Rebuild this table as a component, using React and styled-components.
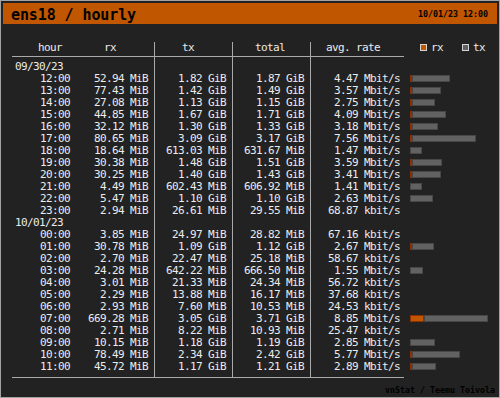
import React from "react";
import styled, { createGlobalStyle } from "styled-components";

const GlobalStyle = createGlobalStyle`
    *, *::before, *::after {
        box-sizing: border-box;
    }
    html, body {
        margin: 0;
        padding: 0;
        background: #222222;
    }
    body {
        font-family: "DejaVu Sans Mono", "Liberation Mono", monospace;
    }
`;

const ORANGE = "#c05600";
const LINE = "#aaaaaa";
const BAR_MAX = 78;

const days = [
    {
        date: "09/30/23",
        hours: [
            ["12:00", "52.94 MiB", "1.82 GiB", "1.87 GiB", "4.47 Mbit/s"],
            ["13:00", "77.43 MiB", "1.42 GiB", "1.49 GiB", "3.57 Mbit/s"],
            ["14:00", "27.08 MiB", "1.13 GiB", "1.15 GiB", "2.75 Mbit/s"],
            ["15:00", "44.85 MiB", "1.67 GiB", "1.71 GiB", "4.09 Mbit/s"],
            ["16:00", "32.12 MiB", "1.30 GiB", "1.33 GiB", "3.18 Mbit/s"],
            ["17:00", "80.65 MiB", "3.09 GiB", "3.17 GiB", "7.56 Mbit/s"],
            ["18:00", "18.64 MiB", "613.03 MiB", "631.67 MiB", "1.47 Mbit/s"],
            ["19:00", "30.38 MiB", "1.48 GiB", "1.51 GiB", "3.59 Mbit/s"],
            ["20:00", "30.25 MiB", "1.40 GiB", "1.43 GiB", "3.41 Mbit/s"],
            ["21:00", "4.49 MiB", "602.43 MiB", "606.92 MiB", "1.41 Mbit/s"],
            ["22:00", "5.47 MiB", "1.10 GiB", "1.10 GiB", "2.63 Mbit/s"],
            ["23:00", "2.94 MiB", "26.61 MiB", "29.55 MiB", "68.87 kbit/s"],
        ],
    },
    {
        date: "10/01/23",
        hours: [
            ["00:00", "3.85 MiB", "24.97 MiB", "28.82 MiB", "67.16 kbit/s"],
            ["01:00", "30.78 MiB", "1.09 GiB", "1.12 GiB", "2.67 Mbit/s"],
            ["02:00", "2.70 MiB", "22.47 MiB", "25.18 MiB", "58.67 kbit/s"],
            ["03:00", "24.28 MiB", "642.22 MiB", "666.50 MiB", "1.55 Mbit/s"],
            ["04:00", "3.01 MiB", "21.33 MiB", "24.34 MiB", "56.72 kbit/s"],
            ["05:00", "2.29 MiB", "13.88 MiB", "16.17 MiB", "37.68 kbit/s"],
            ["06:00", "2.93 MiB", "7.60 MiB", "10.53 MiB", "24.53 kbit/s"],
            ["07:00", "669.28 MiB", "3.05 GiB", "3.71 GiB", "8.85 Mbit/s"],
            ["08:00", "2.71 MiB", "8.22 MiB", "10.93 MiB", "25.47 kbit/s"],
            ["09:00", "10.15 MiB", "1.18 GiB", "1.19 GiB", "2.85 Mbit/s"],
            ["10:00", "78.49 MiB", "2.34 GiB", "2.42 GiB", "5.77 Mbit/s"],
            ["11:00", "45.72 MiB", "1.17 GiB", "1.21 GiB", "2.89 Mbit/s"],
        ],
    },
];

// flatten into display rows: a date line followed by its hours
const toMiB = (s) => {
    const [num, unit] = s.split(" ");
    return unit === "GiB" ? parseFloat(num) * 1024 : parseFloat(num);
};

const rows = days.flatMap((day) => [
    { type: "date", date: day.date },
    ...day.hours.map(([hour, rx, tx, total, rate]) => ({
        type: "hour",
        hour,
        rx,
        tx,
        total,
        rate,
    })),
]);

const maxTotal = Math.max(
    ...rows.filter((r) => r.type === "hour").map((r) => toMiB(r.total))
);

const Frame = styled.div`
    width: 500px;
    height: 398px;
    border: 1px solid #a3a3a3;
    padding: 2px;
    background: #222222;
    color: #ececec;
    display: flex;
    flex-direction: column;
`;

const TitleBar = styled.div`
    height: 21px;
    flex-shrink: 0;
    background: ${ORANGE};
    color: #000000;
    display: flex;
    justify-content: space-between;
    align-items: flex-start;
`;

const Title = styled.h1`
    margin: 0;
    padding: 3px 0 0 8px;
    font: bold 15px/18px "DejaVu Sans Mono", monospace;
    letter-spacing: -0.1px;
`;

const Tiny = styled.span`
    font: bold 8.3px/${(props) => props.$lh || 10}px "DejaVu Sans Mono",
        monospace;
    white-space: pre;
`;

const Stamp = styled(Tiny)`
    padding: 1px 9px 0 0;
`;

const Table = styled.div`
    display: flex;
    margin: 18px 0 0 9px;
    font-size: 11px;
    letter-spacing: -0.62px;
    white-space: pre;
`;

const Column = styled.div`
    display: flex;
    flex-direction: column;
    width: ${(props) => (props.$w ? `${props.$w}px` : "auto")};
    flex: ${(props) => (props.$w ? "none" : "1")};
    border-left: ${(props) => (props.$line ? `1px solid ${LINE}` : "none")};
`;

const Head = styled.div`
    display: flex;
    align-items: flex-start;
    height: 15px;
    padding-bottom: 3px;
    line-height: 11px;
    border-bottom: 1px solid
        ${(props) => (props.$rule ? LINE : "transparent")};
`;

const HeadLabel = styled.span`
    margin-left: ${(props) => props.$x}px;
`;

const Body = styled.div`
    padding: 4px 0;
    border-bottom: 1px solid
        ${(props) => (props.$rule ? LINE : "transparent")};
`;

const Row = styled.div`
    display: flex;
    justify-content: ${(props) => (props.$left ? "flex-start" : "flex-end")};
    height: 12px;
    line-height: 12px;
    padding: ${(props) => (props.$left ? "0 0 0 3px" : `0 ${props.$pr}px 0 0`)};
`;

const Cell = styled.span`
    display: inline-block;
    width: ${(props) => props.$w}px;
    text-align: right;
`;

const Swatch = styled.span`
    display: inline-block;
    width: 7px;
    height: 7px;
    margin-top: 2px;
    border: 1px solid #d4d4d4;
    background: ${(props) => props.$color};
`;

const Legend = styled.span`
    margin-left: ${(props) => props.$gap}px;
`;

const BarRow = styled.div`
    display: flex;
    height: 12px;
    padding: 2px 0 0 6px;
`;

const Segment = styled.span`
    display: block;
    height: 7px;
    width: ${(props) => props.$w}px;
    background: ${(props) => (props.$rx ? ORANGE : "#626262")};
    border: 1px solid ${(props) => (props.$rx ? "#8e2f00" : "#474747")};
`;

const Footer = styled.div`
    display: flex;
    justify-content: flex-end;
    margin-top: 7px;
    padding-right: 2px;
    color: #000000;
`;

const Bar = ({ row }) => {
    const totalW = Math.floor((toMiB(row.total) / maxTotal) * BAR_MAX);
    if (totalW < 1) return <BarRow />;
    const rxW = Math.round((toMiB(row.rx) / maxTotal) * BAR_MAX);
    return (
        <BarRow>
            {rxW > 0 && <Segment $rx $w={rxW} />}
            <Segment $w={totalW - rxW} />
        </BarRow>
    );
};

const ValueColumn = ({ field, label, x, w, pr }) => (
    <Column $w={w} $line>
        <Head $rule>
            <HeadLabel $x={x}>{label}</HeadLabel>
        </Head>
        <Body $rule>
            {rows.map((row, i) => (
                <Row key={i} $pr={pr}>
                    {row.type === "hour" ? row[field] : ""}
                </Row>
            ))}
        </Body>
    </Column>
);

export default function App() {
    return (
        <>
            <GlobalStyle />
            <Frame>
                <TitleBar>
                    <Title>ens18 / hourly</Title>
                    <Stamp $lh={20}>10/01/23 12:00</Stamp>
                </TitleBar>
                <Table>
                    <Column $w={142}>
                        <Head $rule>
                            <HeadLabel $x={26}>hour</HeadLabel>
                            <HeadLabel $x={42}>rx</HeadLabel>
                        </Head>
                        <Body $rule>
                            {rows.map((row, i) =>
                                row.type === "date" ? (
                                    <Row key={i} $left>
                                        {row.date}
                                    </Row>
                                ) : (
                                    <Row key={i} $pr={6}>
                                        <Cell $w={58}>{row.hour}</Cell>
                                        <Cell $w={78}>{row.rx}</Cell>
                                    </Row>
                                )
                            )}
                        </Body>
                    </Column>
                    <ValueColumn field="tx" label="tx" x={27} w={78} pr={6} />
                    <ValueColumn
                        field="total"
                        label="total"
                        x={22}
                        w={78}
                        pr={6}
                    />
                    <ValueColumn
                        field="rate"
                        label="avg. rate"
                        x={15}
                        w={94}
                        pr={4}
                    />
                    <Column>
                        <Head>
                            <Swatch
                                $color={ORANGE}
                                style={{ marginLeft: 16 }}
                            />
                            <Legend $gap={4}>rx</Legend>
                            <Swatch
                                $color="#626262"
                                style={{ marginLeft: 19 }}
                            />
                            <Legend $gap={4}>tx</Legend>
                        </Head>
                        <Body>
                            {rows.map((row, i) =>
                                row.type === "hour" ? (
                                    <Bar key={i} row={row} />
                                ) : (
                                    <BarRow key={i} />
                                )
                            )}
                        </Body>
                    </Column>
                </Table>
                <Footer>
                    <Tiny>vnStat / Teemu Toivola</Tiny>
                </Footer>
            </Frame>
        </>
    );
}
